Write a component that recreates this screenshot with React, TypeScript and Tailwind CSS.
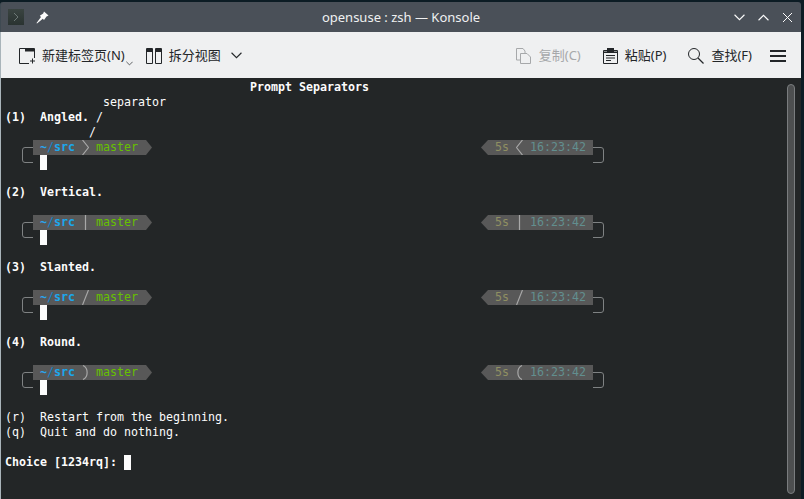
import React from "react";

type Kind = "angled" | "vertical" | "slanted" | "round";

const SEP = "#a8a8a8";

function Sep({ kind, flip }: { kind: Kind; flip?: boolean }) {
  const d =
    kind === "angled"
      ? "M0.5 0 L6.5 7.5 L0.5 15"
      : kind === "vertical"
        ? "M3.5 0 L3.5 15"
        : kind === "slanted"
          ? "M0.5 15 L6.5 0"
          : "M1 0.5 C6.5 3 6.5 12 1 14.5";
  const transform = flip && kind !== "slanted" ? "translate(7 0) scale(-1 1)" : undefined;
  return (
    <svg width="7" height="15" viewBox="0 0 7 15" className="block shrink-0">
      <path d={d} transform={transform} fill="none" stroke={SEP} strokeWidth="1.2" />
    </svg>
  );
}

function Bracket({ right }: { right?: boolean }) {
  return (
    <svg width="11" height="30" viewBox="0 0 11 30" className="block shrink-0">
      <path
        d={right ? "M0 7.5 H8 Q10.5 7.5 10.5 10 V20 Q10.5 22.5 8 22.5 H0" : "M11 7.5 H3 Q0.5 7.5 0.5 10 V20 Q0.5 22.5 3 22.5 H11"}
        fill="none"
        stroke="#7f8283"
        strokeWidth="1"
      />
    </svg>
  );
}

function Prompt({ kind }: { kind: Kind }) {
  return (
    <div className="ml-[21px] flex h-[30px] w-[582px] justify-between">
      <div className="flex">
        <Bracket />
        <div className="flex flex-col">
          <div className="flex h-[15px]">
            <div className="flex h-[15px] w-[113px] items-center bg-[#585858] pl-[7px]">
              <span className="w-[7px] font-bold text-[#2aa6f0]">~</span>
              <span className="w-[7px] text-[#1482c8]">/</span>
              <span className="w-[28px] font-bold text-[#1ba8ee]">src</span>
              <Sep kind={kind} />
              <span className="ml-[7px] text-[#66c000]">master</span>
            </div>
            <svg width="6" height="15" viewBox="0 0 6 15" className="block">
              <path d="M0 0 L6 7.5 L0 15 Z" fill="#585858" />
            </svg>
          </div>
          <div className="ml-[7px] h-[15px] w-[7px] bg-[#fcfcfc]" />
        </div>
      </div>
      <div className="flex">
        <div className="flex h-[15px]">
          <svg width="7" height="15" viewBox="0 0 7 15" className="block">
            <path d="M7 0 L0 7.5 L7 15 Z" fill="#585858" />
          </svg>
          <div className="flex h-[15px] w-[105px] items-center bg-[#585858] pl-[7px]">
            <span className="w-[21px] text-[#8f8f62]">5s</span>
            <Sep kind={kind} flip />
            <span className="ml-[7px] text-[#628f8f]">16:23:42</span>
          </div>
        </div>
        <Bracket right />
      </div>
    </div>
  );
}

function Line({ children, bold }: { children?: React.ReactNode; bold?: boolean }) {
  return <div className={`h-[15px] whitespace-pre leading-[15px] ${bold ? "font-bold" : ""}`}>{children}</div>;
}

function NewTabIcon() {
  return (
    <svg width="17" height="16" viewBox="0 0 17 16" className="block shrink-0">
      <path d="M0.5 15.5 V0.5 H15.5 V10 M0.5 15.5 H10" fill="none" stroke="#232629" strokeWidth="1" />
      <path d="M6 1 H15 V3.5 H6 Z" fill="#232629" />
      <path d="M13.5 10.5 V15.5 M11 13 H16" stroke="#232629" strokeWidth="1" />
    </svg>
  );
}

function SplitIcon() {
  return (
    <svg width="16" height="16" viewBox="0 0 16 16" className="block shrink-0">
      <path d="M0.5 0.5 H6.5 V15.5 H0.5 Z M9.5 0.5 H15.5 V15.5 H9.5 Z" fill="none" stroke="#232629" />
      <path d="M1 1 H6 V4 H1 Z M10 1 H15 V4 H10 Z" fill="#232629" />
    </svg>
  );
}

function CopyIcon() {
  return (
    <svg width="15" height="16" viewBox="0 0 15 16" className="block shrink-0">
      <path d="M1 0.5 H7 L9 3 V12 H0.5 V0.5 Z" fill="none" stroke="#a6a8aa" />
      <path d="M4.5 5.5 H11 L14.5 9 V15.5 H4.5 Z" fill="#eff0f1" stroke="#a6a8aa" />
    </svg>
  );
}

function PasteIcon() {
  return (
    <svg width="15" height="16" viewBox="0 0 15 16" className="block shrink-0">
      <path d="M0.5 2.5 H14.5 V15.5 H0.5 Z" fill="none" stroke="#232629" />
      <path d="M4 0 H11 V3.5 H14 V5 H1 V3.5 H4 Z" fill="#232629" />
      <path d="M3 7.5 H12 M3 10 H12 M3 12.5 H8" stroke="#232629" />
    </svg>
  );
}

function SearchIcon() {
  return (
    <svg width="16" height="16" viewBox="0 0 16 16" className="block shrink-0">
      <circle cx="6" cy="6" r="5.5" fill="none" stroke="#232629" />
      <path d="M10 10 L15.5 15.5" stroke="#232629" strokeWidth="1.2" />
    </svg>
  );
}

function Chevron({ up, size, color }: { up?: boolean; size: number; color: string }) {
  return (
    <svg width={size} height={size} viewBox="0 0 10 10" className="block shrink-0">
      <path d={up ? "M0.5 7.5 L5 3 L9.5 7.5" : "M0.5 2.5 L5 7 L9.5 2.5"} fill="none" stroke={color} strokeWidth="1" />
    </svg>
  );
}

export default function App() {
  return (
    <div className="flex h-[499px] w-[804px] flex-col overflow-hidden bg-[#0c1c24] pt-[2px] pr-[3px] font-['Noto_Sans','Noto_Sans_CJK_SC',sans-serif]">
      <div className="flex h-[30px] items-center rounded-t-[3px] border-l border-[#3f4a52] bg-[#4a5058] pl-[7px] pr-[8px]">
        <div className="flex h-[16px] w-[16px] items-center justify-center bg-gradient-to-b from-[#3a4441] to-[#2a3331]">
          <svg width="6" height="10" viewBox="0 0 6 10" className="block">
            <path d="M1 1 L5 5 L1 9" fill="none" stroke="#6d7876" strokeWidth="1" />
          </svg>
        </div>
        <svg width="13" height="13" viewBox="0 0 13 13" className="ml-[12px] block">
          <path d="M8 0.5 L12.5 4.5 L10.5 5.5 L8 9 L6.8 7.8 L1 12.5 L0.5 12 L5 6 L3.8 4.8 L7.2 2.4 Z" fill="#fcfcfc" />
        </svg>
        <div className="flex-1 pl-[19px] text-center text-[13px] leading-[18px] text-[#eff0f1]">opensuse : zsh — Konsole</div>
        <div className="flex items-center gap-[13px]">
          <Chevron size={11} color="#fcfcfc" />
          <Chevron up size={11} color="#fcfcfc" />
          <svg width="11" height="11" viewBox="0 0 11 11" className="block">
            <path d="M1 1 L10 10 M10 1 L1 10" stroke="#fcfcfc" strokeWidth="1" />
          </svg>
        </div>
      </div>
      <div className="flex h-[46px] items-center border-l border-[#a9b4ba] bg-[#eff0f1] pl-[18px] pr-[15px] pt-[1px] text-[13px] text-[#232629]">
        <NewTabIcon />
        <span className="ml-[6px] pt-[1px]">新建标签页(N)</span>
        <div className="mb-[-16px] ml-[1px]">
          <Chevron size={7} color="#232629" />
        </div>
        <div className="ml-[13px]">
          <SplitIcon />
        </div>
        <span className="ml-[7px] pt-[1px]">拆分视图</span>
        <div className="ml-[10px]">
          <Chevron size={11} color="#232629" />
        </div>
        <div className="flex-1" />
        <CopyIcon />
        <span className="ml-[8px] pt-[1px] text-[#a6a8aa]">复制(C)</span>
        <div className="ml-[22px]">
          <PasteIcon />
        </div>
        <span className="ml-[7px] pt-[1px]">粘贴(P)</span>
        <div className="ml-[22px]">
          <SearchIcon />
        </div>
        <span className="ml-[7px] pt-[1px]">查找(F)</span>
        <div className="ml-[18px] flex w-[16px] flex-col gap-[3px]">
          <div className="h-[2px] bg-[#232629]" />
          <div className="h-[2px] bg-[#232629]" />
          <div className="h-[2px] bg-[#232629]" />
        </div>
      </div>
      <div className="relative min-h-0 flex-1 border-l border-[#a9b4ba] bg-[#232627] pl-[4px] pt-[2px] font-['DejaVu_Sans_Mono',monospace] text-[11.63px] leading-[15px] text-[#fcfcfc]">
        <Line bold>{"                                   Prompt Separators"}</Line>
        <Line>{"              separator"}</Line>
        <Line>
          <b>{"(1)  Angled."}</b>
          {" /"}
        </Line>
        <Line>{"            /"}</Line>
        <div className="-ml-[4px]">
          <Prompt kind="angled" />
        </div>
        <Line />
        <Line bold>{"(2)  Vertical."}</Line>
        <Line />
        <div className="-ml-[4px]">
          <Prompt kind="vertical" />
        </div>
        <Line />
        <Line bold>{"(3)  Slanted."}</Line>
        <Line />
        <div className="-ml-[4px]">
          <Prompt kind="slanted" />
        </div>
        <Line />
        <Line bold>{"(4)  Round."}</Line>
        <Line />
        <div className="-ml-[4px]">
          <Prompt kind="round" />
        </div>
        <Line />
        <Line>{"(r)  Restart from the beginning."}</Line>
        <Line>{"(q)  Quit and do nothing."}</Line>
        <Line />
        <div className="flex h-[15px]">
          <span className="whitespace-pre font-bold">{"Choice [1234rq]: "}</span>
          <div className="h-[15px] w-[7px] bg-[#fcfcfc]" />
        </div>
        <div className="absolute bottom-[5px] right-[6px] top-[6px] w-[8px] rounded-full border border-[#7a7d7f] bg-[#4d4f50]" />
      </div>
    </div>
  );
}
